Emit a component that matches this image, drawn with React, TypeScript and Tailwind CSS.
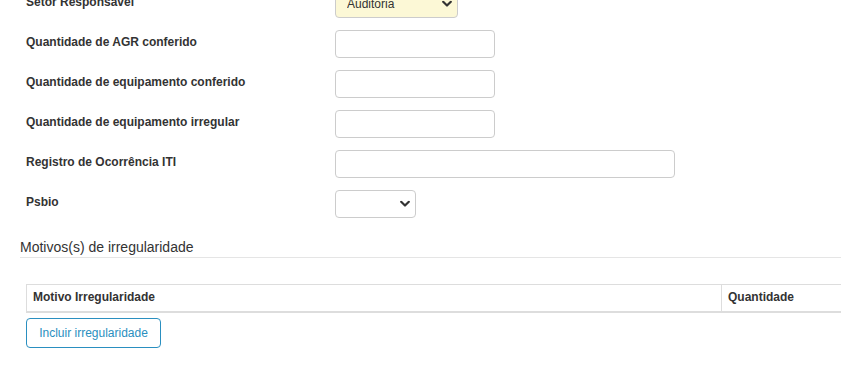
import React from "react";

const Chevron = () => (
  <svg width="10" height="7" viewBox="0 0 10 7" className="pointer-events-none absolute right-[6px] top-1/2 -translate-y-1/2">
    <path d="M1.2 1.3 L5 5 L8.8 1.3" fill="none" stroke="#333" strokeWidth="2.2" strokeLinecap="round" strokeLinejoin="round" />
  </svg>
);

function Row({ label, children }: { label: string; children: React.ReactNode }) {
  return (
    <div className="flex h-[40px] items-start">
      <div className="w-[309px] pt-[4px] text-[12px] font-bold leading-[17px] text-[#333]">{label}</div>
      {children}
    </div>
  );
}

const inputCls =
  "h-[28px] rounded-[4px] border border-[#ccc] bg-white px-[8px] text-[12px] outline-none";

export default function App() {
  return (
    <div
      className="h-[369px] w-[841px] overflow-hidden bg-white text-[#333]"
      style={{ fontFamily: '"Liberation Sans", Arial, sans-serif' }}
    >
      <div className="-mt-[10px] pl-[20px]">
        <div className="pl-[6px]">
          <Row label="Setor Responsável">
            <div className="relative">
              <select className="h-[28px] w-[123px] appearance-none rounded-[4px] border border-[#ccc] bg-[#fcf8d6] pl-[11px] text-[12px] text-[#333] outline-none">
                <option>Auditoria</option>
              </select>
              <Chevron />
            </div>
          </Row>
          <Row label="Quantidade de AGR conferido">
            <input className={`${inputCls} w-[160px]`} />
          </Row>
          <Row label="Quantidade de equipamento conferido">
            <input className={`${inputCls} w-[160px]`} />
          </Row>
          <Row label="Quantidade de equipamento irregular">
            <input className={`${inputCls} w-[160px]`} />
          </Row>
          <Row label="Registro de Ocorrência ITI">
            <input className={`${inputCls} w-[340px]`} />
          </Row>
          <Row label="Psbio">
            <div className="relative">
              <select className="h-[28px] w-[81px] appearance-none rounded-[4px] border border-[#ccc] bg-white text-[12px] outline-none">
                <option></option>
              </select>
              <Chevron />
            </div>
          </Row>
        </div>

        <div className="mt-[8px] w-[900px] border-b border-[#e5e5e5] text-[14px] leading-[19px] text-[#333]">
          Motivos(s) de irregularidade
        </div>

        <div className="pl-[6px]">
          <table className="mt-[26px] w-[880px] border-collapse text-[12px] text-[#333]">
            <thead>
              <tr className="border-t border-b-2 border-[#ddd]">
                <th className="w-[695px] border-l border-[#ddd] pb-[5px] pl-[6px] pt-[4px] text-left font-bold leading-[17px]">
                  Motivo Irregularidade
                </th>
                <th className="border-l border-[#ddd] pb-[5px] pl-[6px] pt-[4px] text-left font-bold leading-[17px]">
                  Quantidade
                </th>
              </tr>
            </thead>
          </table>
          <button className="mt-[5px] h-[30px] w-[135px] rounded-[4px] border border-[#2a8fc0] bg-white text-[12px] text-[#2a8fc0]">
            Incluir irregularidade
          </button>
        </div>
      </div>
    </div>
  );
}
